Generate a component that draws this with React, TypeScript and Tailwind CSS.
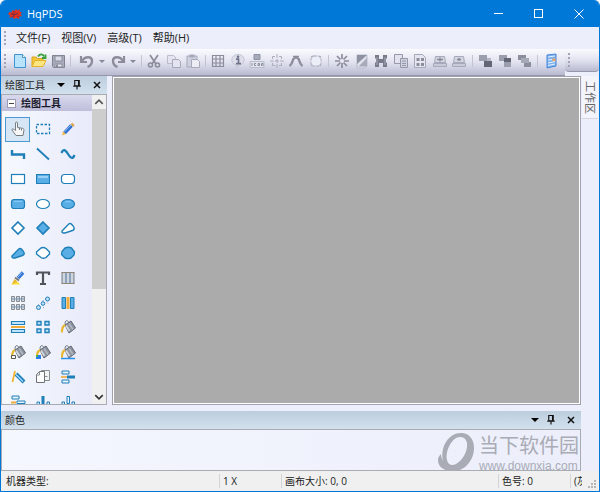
import type { ReactNode } from "react";

const BLUE = "#1f7fb8";
const FILL = "#5aaee6";
const GRAY = "#8b8d9b";
const LIGHT = "#b9bccb";

function Icon({ children, size = 16 }: { children: ReactNode; size?: number }) {
  return (
    <svg width={size} height={size} viewBox="0 0 16 16" fill="none" aria-hidden="true" className="shrink-0">
      {children}
    </svg>
  );
}

const icons: Record<string, ReactNode> = {
  新建: (
    <>
      <path d="M2.500 1.500h8l3 3v10h-11z" fill="#b9e2fb" stroke="#3f95cf" />
      <path d="M10.500 1.500v3h3" fill="#fff" stroke="#3f95cf" />
    </>
  ),
  打开: (
    <>
      <path d="M1 13.500V4h4l1.500 1.500H12V8" fill="#f3c63b" stroke="#d9a41c" />
      <path d="M1 13.500l3-6h11l-3 6z" fill="#fde682" stroke="#e3b42c" />
      <path d="M7 3.500c2-3 5-2.500 6 0M14.500 1.500V5H11" stroke="#38a03a" strokeWidth="1.800" />
    </>
  ),
  保存: (
    <>
      <path d="M2.500 2.500h12v12h-11l-1-1z" fill="#a9acba" stroke="#7f8290" />
      <path d="M5 3h7v5H5z" fill="#d9dbe6" stroke="#8b8e9c" />
      <path d="M5 11h7v3H5z" fill="#e6e7ef" stroke="#8b8e9c" />
      <path d="M7 11.500V14" stroke="#747784" strokeWidth="1.500" />
    </>
  ),
  撤销: (
    <>
      <path d="M2 3v6h6" stroke={GRAY} strokeWidth="2.200" />
      <path d="M3 8c3-5 10-5 10 0 0 3-2 5-4.500 6" stroke={GRAY} strokeWidth="2.400" />
    </>
  ),
  重做: (
    <>
      <path d="M14 3v6H8" stroke={GRAY} strokeWidth="2.200" />
      <path d="M13 8C10 3 3 3 3 8c0 3 2 5 4.500 6" stroke={GRAY} strokeWidth="2.400" />
    </>
  ),
  剪切: (
    <>
      <path d="M4 2l6 9M12 2l-6 9" stroke={GRAY} strokeWidth="1.700" />
      <circle cx="4.500" cy="12" r="2" stroke={GRAY} strokeWidth="1.600" />
      <circle cx="11.500" cy="12" r="2" stroke={GRAY} strokeWidth="1.600" />
    </>
  ),
  复制: (
    <>
      <path d="M1.500 2.500h6l2 2v6h-8z" fill="#e3e4f0" stroke={LIGHT} />
      <path d="M6.500 6.500h6l2 2v6h-8z" fill="#e3e4f0" stroke="#a6a9b9" />
    </>
  ),
  粘贴: (
    <>
      <path d="M2 3h10v11H2z" fill="#cfd1df" stroke="#a6a9b9" />
      <path d="M4.500 1.500h5v3h-5z" fill="#a6a9b9" />
      <path d="M6.500 6.500h6l2 2v6h-8z" fill="#ececf5" stroke="#a6a9b9" />
    </>
  ),
  网格: <path d="M2.500 2.500h11v11h-11zM6 2v12M10 2v12M2 6h12M2 10h12" stroke={GRAY} strokeWidth="1.200" />,
  信息: (
    <>
      <path d="M8 1.500c8 0 8 10 1 10.500L7 15v-3C0 11.500 0 1.500 8 1.500z" fill="#dcdeea" stroke="#c2c5d4" />
      <circle cx="8" cy="3.800" r="1.300" fill="#70748a" />
      <path d="M6 6.200h2.500V10.500M6 10.700h5" stroke="#70748a" strokeWidth="1.700" />
    </>
  ),
  图标: (
    <>
      <path d="M5 1.500h6v5H5z" fill="#a7aabb" stroke="#8f92a3" />
      <path d="M1 8.500h14v6H1z" fill="#e3e4ef" stroke={LIGHT} />
      <path d="M3 10v3M7 10.500H5.500v2H7M9 10.500h1.500v2H9zM12.500 13v-2.500H14V13" stroke={GRAY} />
    </>
  ),
  居中: (
    <>
      <path d="M8 1v14M1 8h14" stroke="#a9acbb" strokeDasharray="4 1" />
      <path d="M3.500 6V3.500H6M10 3.500h2.500V6M12.500 10v2.500H10M6 12.500H3.500V10" stroke="#a9acbb" />
    </>
  ),
  曲线: (
    <>
      <path d="M1.500 13C5 11 4 4.500 8 4.500s3 6.500 6.500 8.500" stroke={GRAY} strokeWidth="2.200" />
      <path d="M5 3.500h6M4 6l2 1M12 6l-2 1M3 9l2 1M13 9l-2 1" stroke={GRAY} strokeWidth="1.600" />
    </>
  ),
  选区: (
    <>
      <rect x="3" y="3" width="10" height="10" rx="3" fill="#eceef7" stroke={LIGHT} strokeWidth="1.300" strokeDasharray="3 1" />
      <path d="M3 3h1.500v1.500H3zM11.500 3H13v1.500h-1.500zM3 11.500h1.500V13H3zM11.500 11.500H13V13h-1.500z" fill="#a9acbb" />
    </>
  ),
  放射: (
    <path
      d="M8 1v5M8 10v5M1 8h5M10 8h5M3 3l3.500 3.500M9.500 9.500L13 13M13 3L9.500 6.500M6.500 9.500L3 13"
      stroke={GRAY}
      strokeWidth="1.700"
    />
  ),
  反色: (
    <>
      <path d="M3 2h10v11l-2 2H3z" fill="#dfe1ec" stroke={LIGHT} />
      <path d="M3 2h10L3 11z" fill="#8f92a3" />
      <path d="M4.500 13.500L13 5v8.500z" fill="#a7aabb" />
    </>
  ),
  查找: (
    <>
      <path d="M2 2h4v4h4V2h4v3l-1 1v3l1 1v4h-4v-4H6v4H2v-4l1-1V6L2 5z" fill="#777a89" />
      <path d="M4 4v8M12 4v8" stroke="#a5a8b7" />
    </>
  ),
  页面: (
    <>
      <path d="M1.500 1.500h8v9h-8z" fill="#e2e3ee" stroke="#9699a9" />
      <path d="M7.500 5.500h7v9h-7z" fill="#cfd1de" stroke="#9699a9" />
      <path d="M9 8h4M9 10.500h4M9 12.500h4" stroke="#9699a9" />
    </>
  ),
  文档: (
    <>
      <path d="M2.500 1.500h8l3 3v10h-11z" fill="#e5e6f0" stroke="#a6a9b9" />
      <path d="M4.500 5h3v3h-3zM9 5h3v3H9zM4.500 10h3v3h-3zM9 10h3v3H9z" fill={GRAY} />
    </>
  ),
  上传: (
    <>
      <path d="M3.500 3.500h9l1 6h-11z" fill="#d3d5e0" stroke="#a6a9b9" />
      <path d="M1.500 10.500h13v3h-13z" fill="#c8cad7" stroke="#a6a9b9" />
      <path d="M5 6.500h6M8 4.500v4" stroke={GRAY} strokeWidth="1.500" />
    </>
  ),
  下载: (
    <>
      <path d="M3.500 3.500h9l1 6h-11z" fill="#d3d5e0" stroke="#a6a9b9" />
      <path d="M1.500 10.500h13v3h-13z" fill="#c8cad7" stroke="#a6a9b9" />
      <path d="M6 6.500h4M8 5v3" stroke={GRAY} strokeWidth="1.500" />
    </>
  ),
  合并: (
    <>
      <path d="M2 2h8v6H2z" fill="#9b9eac" />
      <path d="M7 8h8v6H7z" fill="#636674" />
      <path d="M10 5h4v3h-4z" fill="#b5b7c4" />
    </>
  ),
  相交: (
    <>
      <path d="M2 2h8v6H2zM7 9h7v5H7z" fill="#9b9eac" />
      <path d="M7 5h7v4H7z" fill="#636674" />
    </>
  ),
  相减: (
    <>
      <path d="M2 2h8v5H2zM8 9h7v5H8z" fill="#8b8e9d" />
      <path d="M5 5h8v5H5z" fill="#a6a9b7" />
    </>
  ),
  面板: (
    <>
      <path d="M4 2l9-1v12l-9 2z" fill="#7fb3ef" stroke="#4a86d8" />
      <path d="M5 4l7-1M5 7l4-.5M5 10l7-1.500M5 12.500l7-1.500" stroke="#e6f1ff" />
      <path d="M9.500 5.500h3v2.500h-3z" fill="#f0a35c" />
    </>
  ),
};

const bucket = (
  <>
    <path d="M5 6l6-4 4.500 7-6.500 5z" fill="#8d949f" stroke="#5f6671" />
    <path d="M6 6.500L9.500 12" stroke="#cfd4db" strokeWidth="2" />
    <path d="M9 4.500l4 6" stroke="#b3b9c3" strokeWidth="1.500" />
    <path d="M5.500 6C4 2 7 0 9 3.500" stroke="#68707c" />
    <path d="M5 6C2 7.500 2 10 2 13.500" stroke="#e8b62c" strokeWidth="2" />
  </>
);

const tools: [string, ReactNode][] = [
  ["移动", <path d="M5.500 9.500V2c0-1.300 2-1.300 2 0v4.500l5 .8c1.300.2 1.500 1 1.400 2L13 14.500H6L2 9c-.5-1.200 1-1.800 3.500.5zM9.500 7v2M11.500 7.500v2" fill="#f7f7f7" stroke="#777d83" />],
  ["框选", <rect x="1.500" y="3.500" width="13" height="9" stroke={BLUE} strokeWidth="1.300" strokeDasharray="2.500 1.500" />],
  ["铅笔", <>
    <path d="M4.500 12L11.500 4.500" stroke="#2e6fd0" strokeWidth="3.500" />
    <path d="M4.500 11L11 4" stroke="#8cbcf5" />
    <path d="M2 14.500l1-4 3 2.500z" fill="#f4b942" />
    <path d="M11.500 2.500l2.500 2.500" stroke="#e2a13c" strokeWidth="2" />
  </>],
  ["折线", <path d="M2 4v4.500h12V13" stroke={BLUE} strokeWidth="2.400" />],
  ["直线", <path d="M2 2.500l12 11" stroke={BLUE} strokeWidth="1.800" />],
  ["曲线", <path d="M1.500 7C3 3 5 3 8 8s5 5 6.500 1" stroke={BLUE} strokeWidth="2.300" />],
  ["矩形", <rect x="1.500" y="3.500" width="13" height="9" fill="#fff" stroke={BLUE} strokeWidth="1.200" />],
  ["实心矩形", <><rect x="1.500" y="3.500" width="13" height="9" fill={FILL} stroke={BLUE} /><path d="M3 5h10v2H3z" fill="#9bd0f6" /></>],
  ["圆角矩形", <rect x="1.500" y="3.500" width="13" height="9" rx="3" fill="#fff" stroke={BLUE} strokeWidth="1.200" />],
  ["实心圆角矩形", <><rect x="1.500" y="3.500" width="13" height="9" rx="2.500" fill={FILL} stroke={BLUE} strokeWidth="1.200" /><path d="M4 5.500h8" stroke="#8ccaf5" /></>],
  ["椭圆", <ellipse cx="8" cy="8" rx="6.500" ry="4.500" fill="#fff" stroke={BLUE} strokeWidth="1.200" />],
  ["实心椭圆", <><ellipse cx="8" cy="8" rx="6.500" ry="4.500" fill={FILL} stroke={BLUE} strokeWidth="1.200" /><path d="M5 5.800h6" stroke="#8ccaf5" /></>],
  ["菱形", <path d="M8 2l6 6-6 6-6-6z" fill="#fff" stroke={BLUE} strokeWidth="1.600" />],
  ["实心菱形", <path d="M8 2l6 6-6 6-6-6z" fill={FILL} stroke={BLUE} strokeWidth="1.600" />],
  ["多边形", <path d="M2 11L9 3.800c1.500-.8 3 .2 5 3.700.5 1.500 0 2.500-1.500 3L5 13c-2 .3-3.500-.5-3-2z" fill="#fff" stroke={BLUE} strokeWidth="1.400" />],
  ["实心多边形", <path d="M2 11L9 3.800c1.500-.8 3 .2 5 3.700.5 1.500 0 2.500-1.500 3L5 13c-2 .3-3.500-.5-3-2z" fill={FILL} stroke={BLUE} strokeWidth="1.400" />],
  ["闭合曲线", <path d="M6 3c2-1 3.500-.5 5 .5l3.500 3.500v2L11 12.500c-1.500 1-3.500 1-5 0L1.500 9V7z" fill="#fff" stroke={BLUE} strokeWidth="1.400" strokeLinejoin="round" />],
  ["实心闭合曲线", <path d="M5 3c2.500-1 4.500-1 6.500 0L14.500 7l-.5 3-3 3c-2 .8-4 .8-6 0L1.500 9.500l.5-3z" fill={FILL} stroke={BLUE} strokeWidth="1.400" strokeLinejoin="round" />],
  ["画刷", <>
    <path d="M1 14.500c3-4.500 7-3.500 9 0z" fill="#fbdc35" />
    <path d="M8 8l5-5.500" stroke="#2f74d0" strokeWidth="3.500" />
    <path d="M8 7l4-4.500" stroke="#9cc6f7" />
    <path d="M2 14l2.500-5 3 2.500z" fill="#e8b62c" />
    <path d="M5 7.500l4 3" stroke="#777" strokeWidth="1.800" />
  </>],
  ["文字", <path d="M2 5V2.500h12V5M8 2v12M5 14h6" stroke="#50545a" strokeWidth="2.200" />],
  ["竖分栏", <>
    <path d="M2 2.500h12v11H2z" fill="#bcc3cc" stroke="#7b838e" />
    <path d="M6 2v12M10 2v12" stroke="#5d84aa" />
    <path d="M4 3v10M8 3v10M12 3v10" stroke="#e4e8ee" />
    <path d="M1.500 2.500h13M1.500 13.500h13" stroke="#8f8578" />
  </>],
  ["阵列", <>
    {[1, 9].map((y) => [1, 6, 11].map((x) => (
      <path key={`${x}-${y}`} d={`M${x + 0.5} ${y + 0.5}h3v5h-3z`} fill="#d0d4db" stroke="#858a93" />
    )))}
    <path d="M1 4h14M1 12h14" stroke="#7b97b5" />
  </>],
  ["斜排列", <>
    <circle cx="3.500" cy="12.500" r="2" fill="#bfe0f5" stroke={BLUE} />
    <circle cx="8" cy="8.500" r="1.800" fill="#bfe0f5" stroke={BLUE} />
    <circle cx="12.500" cy="4" r="2" fill="#bfe0f5" stroke={BLUE} />
    <path d="M3 9l1 1M7.500 5l1 1M8 12l1 1M12 7.500l1 1" stroke="#8cacc5" />
  </>],
  ["列宽", <>
    <path d="M2 2.500h3.500v11H2zM10.500 2.500H14v11h-3.500z" fill={FILL} stroke={BLUE} />
    <path d="M8 2v12" stroke="#f0ac3a" strokeWidth="3" />
  </>],
  ["行高", <>
    <path d="M1.500 2.500h13v3h-13zM1.500 10.500h13v3h-13z" fill="#bfe4fb" stroke={BLUE} strokeWidth="1.200" />
    <path d="M1 8h14" stroke="#f0ac3a" strokeWidth="2" />
  </>],
  ["四宫格", <path d="M2 2.500h4v3.500H2zM10 2.500h4v3.500h-4zM2 10h4v3.500H2zM10 10h4v3.500h-4z" fill="#bfe4fb" stroke={BLUE} strokeWidth="1.400" />],
  ["填充", bucket],
  ["边框填充", <>{bucket}<path d="M1.500 11.500h4v3h-4z" fill="#fff" stroke="#555" /></>],
  ["多色填充", <>{bucket}<path d="M1 11h5v4H1z" fill="#2a7bf0" /><path d="M1 11h2v2H1z" fill="#43b649" /></>],
  ["底色填充", <>{bucket}<path d="M1 14.500h14" stroke="#2a8fe8" strokeWidth="1.500" /></>],
  ["荧光笔", <>
    <path d="M6 5l8 8" stroke={BLUE} strokeWidth="4" />
    <path d="M6 5.500l7 7" stroke="#9fd4f7" strokeWidth="1.500" />
    <path d="M5 2L2.500 13" stroke="#efb52f" strokeWidth="1.800" />
  </>],
  ["复制对象", <>
    <path d="M6.500 1.500h8v10h-8z" fill="#f3f3f3" stroke="#8b8f96" />
    <path d="M1.500 5.500l3-3h5v11h-8z" fill="#fff" stroke="#6e7279" />
    <path d="M4.500 3v3H2M10 7.500h2.500" stroke="#8b8f96" />
  </>],
  ["左对齐", <>
    <path d="M2 2h7v3H2zM2 11h7v3H2z" fill="#e7f4fc" stroke={BLUE} />
    <path d="M1 8h6" stroke="#f0ac3a" strokeWidth="1.600" />
    <path d="M7 8h8" stroke={BLUE} strokeWidth="3" />
  </>],
  ["行对齐", <>
    <path d="M2 2h7v3H2zM7 7h8v2.500H7zM2 12h7v3H2z" fill="#e7f4fc" stroke={BLUE} />
    <path d="M1 8.500h5" stroke="#f0ac3a" strokeWidth="2" />
  </>],
  ["顶对齐", <>
    <path d="M2 8h2.500v7H2zM12 8h2.500v7H12z" fill="#e7f4fc" stroke={BLUE} />
    <path d="M8 2v8" stroke={BLUE} strokeWidth="3" />
    <path d="M8 10v6" stroke="#f0ac3a" strokeWidth="1.600" />
  </>],
  ["底对齐", <>
    <path d="M2 8h2.500v7H2zM7 2.500h2.500v7H7zM12 8h2.500v7H12z" fill="#e7f4fc" stroke={BLUE} />
    <path d="M8 10v6" stroke="#f0ac3a" strokeWidth="1.600" />
  </>],
];

function ToolGroup({ names, width }: { names: string[]; width: string }) {
  return (
    <div className={`flex shrink-0 justify-between ${width}`}>
      {names.map((name) => (
        <button key={name} type="button" aria-label={name} className="flex h-5 w-4 items-center justify-center">
          <Icon>{icons[name]}</Icon>
        </button>
      ))}
    </div>
  );
}

function Divider() {
  return <span className="mx-1 h-3 w-px shrink-0 bg-[#c3c4d2]" />;
}

function Grip() {
  return (
    <span className="flex shrink-0 flex-col gap-[2px]">
      {[0, 1, 2, 3].map((n) => (
        <span key={n} className="size-[2px] bg-[#a3a5b6]" />
      ))}
    </span>
  );
}

function Caret({ label }: { label: string }) {
  return (
    <button type="button" aria-label={label} className="flex h-5 w-2 shrink-0 items-center justify-center">
      <span className="border-x-[3px] border-t-[3px] border-x-transparent border-t-[#85889a]" />
    </button>
  );
}

function PaneHeader({ title }: { title: string }) {
  return (
    <header className="flex h-[18px] shrink-0 items-center bg-linear-to-b from-[#bccddd] to-[#d3e1ee] px-1 text-[#222]">
      <h2 className="flex-1 whitespace-nowrap">{title}</h2>
      <div className="flex gap-1">
        <button type="button" aria-label={`${title}菜单`} className="flex size-3 items-center justify-center">
          <span className="border-x-[4px] border-t-[4px] border-x-transparent border-t-black" />
        </button>
        <button type="button" aria-label={`固定${title}`} className="flex size-3 items-center justify-center">
          <Icon size={12}>
            <path d="M5 2h6v7H5zM10 2v7M3 9.500h10M8 10v4" stroke="#111" strokeWidth="1.500" />
          </Icon>
        </button>
        <button type="button" aria-label={`关闭${title}`} className="ml-1 flex size-3 items-center justify-center">
          <Icon size={12}>
            <path d="M4 4l8 8M12 4l-8 8" stroke="#111" strokeWidth="2" />
          </Icon>
        </button>
      </div>
    </header>
  );
}

function TitleBar() {
  return (
    <header className="flex h-[27px] shrink-0 items-center bg-[#0078d7] pl-[6px] text-white">
      <Icon>
        <path d="M1 8l1.500-2 2 .5L5.500 4l2 1L9 3l1.500 1.500L13 3l-.5 2.500 2.500 1L13.500 8l1.500 2-2.500.5L12 13l-2.500-1L7 13l-1.500-2L2.500 12l.5-2.500z" fill="#e2331f" />
        <path d="M4 7.500l3 1.500 4-2M5 11l2-1M10 10l2 .5M7 5.500v2" stroke="#7b2b3f" strokeWidth="1.200" />
      </Icon>
      <h1 className="ml-1 flex-1 text-[11px]">HqPDS</h1>
      <button type="button" aria-label="最小化" className="flex h-full w-10 items-center justify-center">
        <span className="h-px w-[9px] bg-white" />
      </button>
      <button type="button" aria-label="最大化" className="flex h-full w-10 items-center justify-center">
        <span className="size-[9px] border border-white" />
      </button>
      <button type="button" aria-label="关闭" className="flex h-full w-[41px] items-center justify-center">
        <svg width="10" height="10" viewBox="0 0 10 10" stroke="#fff" aria-hidden="true">
          <path d="M.5.5l9 9M9.500.5l-9 9" />
        </svg>
      </button>
    </header>
  );
}

function MenuBar() {
  return (
    <nav className="flex h-[22px] shrink-0 items-center bg-[#eceefb] pl-[3px] text-[11px] text-[#222]">
      <Grip />
      <div className="ml-[10px] flex gap-[11px] whitespace-nowrap">
        {["文件(F)", "视图(V)", "高级(T)", "帮助(H)"].map((item) => (
          <button key={item} type="button">{item}</button>
        ))}
      </div>
    </nav>
  );
}

function Toolbar() {
  return (
    <div className="flex h-[27px] shrink-0 bg-[#eceefb]">
      <div className="flex min-w-0 flex-1 items-center border-b border-[#9697aa] bg-linear-to-b from-[#fafaff] via-[#e2e3f0] to-[#b9bad0] pb-[2px] pl-[3px]">
        <Grip />
        <span className="w-[6px] shrink-0" />
        <ToolGroup names={["新建", "打开", "保存"]} width="w-[54px]" />
        <Divider />
        <span className="w-1 shrink-0" />
        <ToolGroup names={["撤销"]} width="w-4" />
        <span className="w-[3px] shrink-0" />
        <Caret label="撤销列表" />
        <span className="w-1 shrink-0" />
        <ToolGroup names={["重做"]} width="w-4" />
        <span className="w-[3px] shrink-0" />
        <Caret label="重做列表" />
        <Divider />
        <ToolGroup names={["剪切", "复制", "粘贴"]} width="w-[55px]" />
        <Divider />
        <ToolGroup names={["网格", "信息", "图标", "居中", "曲线", "选区"]} width="w-[114px]" />
        <Divider />
        <span className="w-px shrink-0" />
        <ToolGroup names={["放射", "反色", "查找", "页面", "文档", "上传", "下载"]} width="w-[133px]" />
        <span className="w-px shrink-0" />
        <Divider />
        <ToolGroup names={["合并", "相交", "相减"]} width="w-[55px]" />
        <span className="w-px shrink-0" />
        <Divider />
        <span className="w-px shrink-0" />
        <ToolGroup names={["面板"]} width="w-4" />
      </div>
      <div className="flex h-[23px] w-[34px] shrink-0 items-center rounded-b-sm border-b border-[#9697aa] bg-linear-to-b from-[#fafaff] via-[#e2e3f0] to-[#b9bad0] pl-[3px]">
        <Grip />
      </div>
    </div>
  );
}

function ScrollBar() {
  return (
    <div className="flex w-[14px] shrink-0 flex-col bg-[#f0f0f0]">
      <button type="button" aria-label="向上滚动" className="flex h-[14px] shrink-0 items-center justify-center">
        <Icon size={10}>
          <path d="M2 11l6-6 6 6" stroke="#555" strokeWidth="2.600" />
        </Icon>
      </button>
      <div className="flex flex-1 flex-col">
        <div className="h-[64%] bg-[#cdcdcd]" />
      </div>
      <button type="button" aria-label="向下滚动" className="flex h-[14px] shrink-0 items-center justify-center">
        <Icon size={10}>
          <path d="M2 5l6 6 6-6" stroke="#333" strokeWidth="2.600" />
        </Icon>
      </button>
    </div>
  );
}

function ToolPane() {
  return (
    <aside className="flex w-[106px] shrink-0 flex-col">
      <PaneHeader title="绘图工具" />
      <div className="flex min-h-0 flex-1 border border-[#a9abb3]">
        <div className="flex min-h-0 flex-1 flex-col overflow-hidden bg-linear-to-r from-[#f5f9fe] to-[#e9eafa]">
          <h3 className="flex h-4 shrink-0 items-center gap-[5px] bg-linear-to-b from-[#d9d9ee] to-[#bebedb] pl-[5px] font-bold text-[#1b1b2d]">
            <span className="flex size-[9px] items-center justify-center border border-[#9a9bb5] bg-white">
              <span className="h-px w-[5px] bg-[#444]" />
            </span>
            绘图工具
          </h3>
          <div className="mt-[6px] ml-[3px] grid h-[297px] w-[75px] shrink-0 grid-cols-3 grid-rows-12">
            {tools.map(([name, art], i) => (
              <button
                key={name}
                type="button"
                aria-label={name}
                aria-pressed={i === 0}
                className="flex items-center justify-center border border-transparent aria-pressed:border-[#4a9ad6] aria-pressed:bg-[#d6e6f5]"
              >
                <Icon>{art}</Icon>
              </button>
            ))}
          </div>
        </div>
        <ScrollBar />
      </div>
    </aside>
  );
}

function Watermark() {
  return (
    <div className="pointer-events-none absolute right-[2px] -bottom-[2px] flex items-center gap-1 text-[#a9abb5]">
      <svg width="38" height="40" viewBox="0 0 38 40" aria-hidden="true">
        <path
          fillRule="evenodd"
          fill="#a9abb5"
          d="M24 1c8 0 13 6 13 15 0 12-9 23-20 23C8 39 1 36 1 28c0-2 1-4 3-6 0 3 1 5 2 7C3 14 12 1 24 1zM23 5c-8 0-15 14-13 23 1 5 5 6 9 4 7-4 12-13 11-21-1-4-3-6-7-6z"
        />
      </svg>
      <div className="whitespace-nowrap">
        <p className="font-['Noto_Sans_CJK_SC',sans-serif] text-[20px] leading-[29px]">当下软件园</p>
        <p className="font-['Liberation_Sans',sans-serif] text-[12px] leading-[14px]">www.downxia.com</p>
      </div>
    </div>
  );
}

function ColorPane() {
  return (
    <section className="relative mt-[6px] flex h-[60px] shrink-0 flex-col">
      <PaneHeader title="颜色" />
      <div className="flex-1 border border-[#a9abb3] bg-linear-to-r from-[#f4f7fe] to-[#eceefb]" />
      <Watermark />
    </section>
  );
}

function StatusBar() {
  return (
    <footer className="flex h-5 shrink-0 items-center bg-[#f0f0f0] whitespace-nowrap text-[#222]">
      <span className="flex-1 pl-[5px]">机器类型:</span>
      <span className="w-[62px] border-l border-[#d4d4d4] pl-[3px]">1 X</span>
      <span className="w-[217px] border-l border-[#d4d4d4] pl-[3px]">画布大小: 0, 0</span>
      <span className="w-[72px] border-l border-[#d4d4d4] pl-[3px]">色号: 0</span>
      <span className="w-[12px] overflow-hidden border-l border-[#d4d4d4] pl-[3px]">(灰</span>
      <span className="flex w-[17px] items-end justify-end self-stretch p-[2px]">
        <svg width="9" height="9" viewBox="0 0 9 9" fill="#b5b5b5" aria-hidden="true">
          <path d="M6 0h2v2H6zM3 3h2v2H3zM6 3h2v2H6zM0 6h2v2H0zM3 6h2v2H3zM6 6h2v2H6z" />
        </svg>
      </span>
    </footer>
  );
}

export default function App() {
  return (
    <div className="bg-white">
      <div className="flex h-screen flex-col overflow-hidden rounded-t-md border-x border-b border-[#0078d7] bg-[#eceefb] font-['Open_Sans','Noto_Sans_CJK_SC',sans-serif] text-[10px] leading-[14px]">
        <TitleBar />
        <MenuBar />
        <Toolbar />
        <div className="flex min-h-0 flex-1">
          <div className="flex min-w-0 flex-1 flex-col">
            <div className="flex min-h-0 flex-1 gap-[5px]">
              <ToolPane />
              <main className="min-w-0 flex-1 border border-[#a0a1ad] bg-white p-px">
                <div className="h-full bg-[#ababab]" />
              </main>
            </div>
            <ColorPane />
          </div>
          <aside className="w-[18px] shrink-0 pl-px">
            <button
              type="button"
              className="flex h-[43px] w-4 items-center justify-center border-b border-[#d5d6e0] bg-[#f3f4fc] text-[11px] text-[#666] [text-orientation:sideways] [writing-mode:vertical-rl]"
            >
              工作区
            </button>
          </aside>
        </div>
        <StatusBar />
      </div>
    </div>
  );
}
